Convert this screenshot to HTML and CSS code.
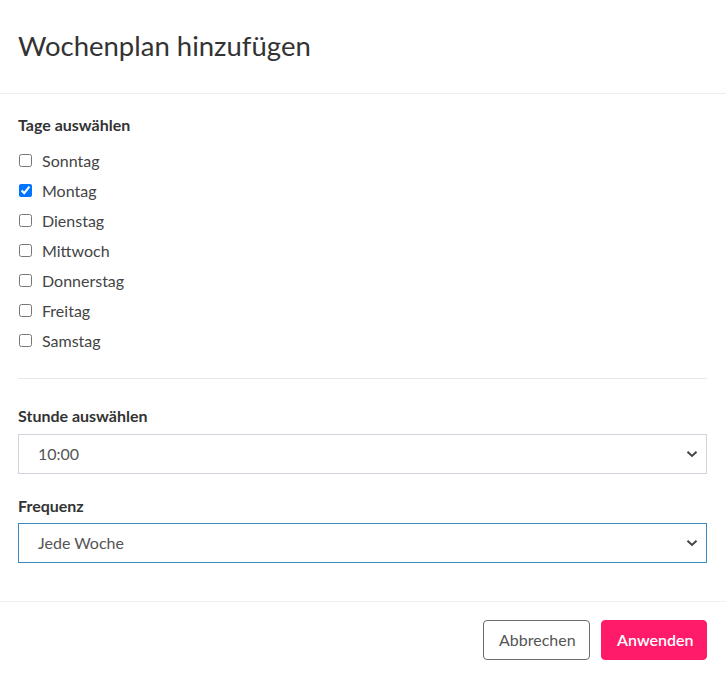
FILE: index.html
```html
<!DOCTYPE html>
<html lang="de">
<head>
<meta charset="utf-8">
<title>Wochenplan hinzufügen</title>
<link rel="stylesheet" href="styles.css">
</head>
<body>
<div class="modal">
  <div class="modal-header">
    <h1 class="modal-title">Wochenplan hinzufügen</h1>
  </div>
  <div class="modal-body">
    <div class="field-label">Tage auswählen</div>
    <ul class="days">
      <li><label class="day"><input type="checkbox"><span>Sonntag</span></label></li>
      <li><label class="day"><input type="checkbox" checked><span>Montag</span></label></li>
      <li><label class="day"><input type="checkbox"><span>Dienstag</span></label></li>
      <li><label class="day"><input type="checkbox"><span>Mittwoch</span></label></li>
      <li><label class="day"><input type="checkbox"><span>Donnerstag</span></label></li>
      <li><label class="day"><input type="checkbox"><span>Freitag</span></label></li>
      <li><label class="day"><input type="checkbox"><span>Samstag</span></label></li>
    </ul>
    <hr class="divider">
    <div class="field-label field-label-hour">Stunde auswählen</div>
    <div class="select">
      <span class="select-value">10:00</span>
      <svg class="chevron" width="12" height="8" viewBox="0 0 12 8"><path d="M1.5 1.8 L6 6 L10.5 1.8" fill="none" stroke="#444" stroke-width="2"/></svg>
    </div>
    <div class="field-label field-label-freq">Frequenz</div>
    <div class="select select-focus">
      <span class="select-value">Jede Woche</span>
      <svg class="chevron" width="12" height="8" viewBox="0 0 12 8"><path d="M1.5 1.8 L6 6 L10.5 1.8" fill="none" stroke="#444" stroke-width="2"/></svg>
    </div>
  </div>
  <div class="modal-footer">
    <button class="btn btn-cancel">Abbrechen</button>
    <button class="btn btn-primary">Anwenden</button>
  </div>
</div>
</body>
</html>
```
FILE: styles.css
```css
* { box-sizing: border-box; }
html, body { margin: 0; padding: 0; background: #fff; }
body {
  font-family: "Lato", "Liberation Sans", sans-serif;
  color: #333;
  width: 726px;
}
.modal { width: 726px; }
.modal-header {
  height: 94px;
  padding: 0 18px;
  display: flex;
  align-items: center;
  border-bottom: 1px solid #eeeeee;
}
.modal-title {
  margin: 0;
  font-size: 27.5px;
  font-weight: 400;
  color: #333;
  line-height: 1;
  padding-bottom: 2px;
}
.modal-body {
  padding: 19px 19px 38px 18px;
  border-bottom: 1px solid #f0f0f0;
}
.field-label {
  font-size: 16px;
  font-weight: 700;
  line-height: 24px;
  color: #333;
}
.days {
  list-style: none;
  margin: 8px 0 0;
  padding: 0;
}
.day {
  display: flex;
  align-items: center;
  height: 30.15px;
  font-size: 16px;
  color: #444;
}
.day input {
  margin: 0 10px 0 1px;
  width: 13px;
  height: 13px;
}
.divider {
  border: 0;
  border-top: 1px solid #e8e8e8;
  margin: 22px 0 0;
}
.field-label-hour { margin-top: 25px; }
.field-label-freq { margin-top: 20px; }
.select {
  margin-top: 6px;
  height: 40px;
  border: 1px solid #d0d4dc;
  display: flex;
  align-items: center;
  justify-content: space-between;
  padding: 0 8px 0 19px;
  font-size: 16px;
  color: #555;
}
.select-focus {
  margin-top: 5px;
  border-color: #3a8bc0;
}
.modal-footer {
  display: flex;
  justify-content: flex-end;
  gap: 11px;
  padding: 18px 19px 19px;
}
.btn {
  height: 40px;
  border-radius: 4px;
  font-family: inherit;
  font-size: 16px;
  padding: 0 15px;
  cursor: pointer;
}
.btn-cancel {
  width: 107px;
  background: #fff;
  border: 1px solid #6b6b6b;
  color: #555;
}
.btn-primary {
  width: 106px;
  background: #ff1a6a;
  border: 1px solid #ff1a6a;
  color: #fff;
  font-weight: 600;
}
```
